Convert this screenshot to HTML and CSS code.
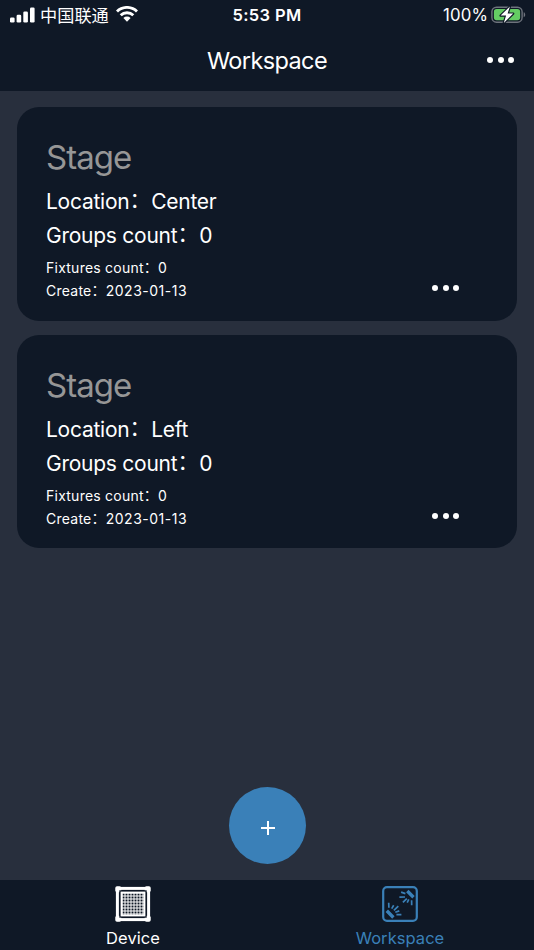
FILE: index.html
```html
<!DOCTYPE html>
<html lang="en">
<head>
<meta charset="utf-8">
<title>Workspace</title>
<link rel="stylesheet" href="styles.css">
</head>
<body>
<div class="app">
  <header class="top">
    <div class="status">
      <div class="carrier">
        <svg class="signal" width="25" height="16" viewBox="0 0 25 16" fill="#fff"><rect x="0" y="10.5" width="4.6" height="5" rx="1.3"/><rect x="6.6" y="7.8" width="4.6" height="7.7" rx="1.3"/><rect x="13.3" y="4.4" width="4.6" height="11.1" rx="1.3"/><rect x="20" y=".5" width="4.6" height="15" rx="1.3"/></svg>
        <span class="carrier-name">中国联通</span>
        <svg class="wifi" width="22" height="16" viewBox="0 0 22 16"><g fill="none" stroke="#fff" stroke-width="2.9"><path d="M1 5.5a14.3 14.3 0 0 1 20 0"/><path d="M4.7 9.3a9 9 0 0 1 12.6 0"/></g><path fill="#fff" d="M7.4 12.1a5.1 5.1 0 0 1 7.2 0L11 15.8z"/></svg>
      </div>
      <span class="clock">5:53 PM</span>
      <div class="power">
        <span class="percent">100%</span>
        <svg width="35" height="19" viewBox="0 0 35 19"><rect x=".9" y="2.2" width="30.2" height="15" rx="4.6" fill="none" stroke="#6e737c" stroke-width="1.4"/><rect x="2.9" y="4.1" width="26.2" height="11.2" rx="2.7" fill="#64cd63"/><path d="M32.7 7.3c2 .6 2 4.3 0 4.9z" fill="#6e737c"/><path d="M18.9 1.6 9.6 10.6h5.5l-2.3 7.3 9.4-9.3h-5.6z" fill="#fff" stroke="#0f1826" stroke-width="2.3" paint-order="stroke" stroke-linejoin="round"/></svg>
      </div>
    </div>
    <div class="nav">
      <h1 class="title">Workspace</h1>
      <button class="more" aria-label="More"><i></i><i></i><i></i></button>
    </div>
  </header>
  <main class="list">
    <article class="card">
      <h2 class="name">Stage</h2>
      <p class="line location">Location<span class="colon">：</span>Center</p>
      <p class="line groups">Groups count<span class="colon">：</span>0</p>
      <p class="small fixtures">Fixtures count<span class="colon">：</span>0</p>
      <div class="foot">
        <p class="small create">Create<span class="colon">：</span><span class="date">2023-01-13</span></p>
        <button class="more" aria-label="More"><i></i><i></i><i></i></button>
      </div>
    </article>
    <article class="card">
      <h2 class="name">Stage</h2>
      <p class="line location">Location<span class="colon">：</span>Left</p>
      <p class="line groups">Groups count<span class="colon">：</span>0</p>
      <p class="small fixtures">Fixtures count<span class="colon">：</span>0</p>
      <div class="foot">
        <p class="small create">Create<span class="colon">：</span><span class="date">2023-01-13</span></p>
        <button class="more" aria-label="More"><i></i><i></i><i></i></button>
      </div>
    </article>
    <button class="add" aria-label="Add"><svg width="14" height="14" viewBox="0 0 14 14"><path d="M7 0v14M0 7h14" stroke="#fff" stroke-width="2"/></svg></button>
  </main>
  <nav class="tabs">
    <a class="tab">
      <svg width="36" height="36" viewBox="0 0 36 36"><defs><pattern id="holes" x="7.5" y="7.5" width="3" height="3" patternUnits="userSpaceOnUse"><rect width="2" height="2" fill="#0f1826"/></pattern></defs><rect x="2.4" y="2.4" width="31.2" height="31.2" fill="none" stroke="#fff" stroke-width="3"/><g fill="#fff"><rect x=".3" y=".3" width="6" height="6" rx="1.8"/><rect x="29.7" y=".3" width="6" height="6" rx="1.8"/><rect x=".3" y="29.7" width="6" height="6" rx="1.8"/><rect x="29.7" y="29.7" width="6" height="6" rx="1.8"/></g><rect x="4.3" y="4.3" width="27.4" height="27.4" fill="#0f1826"/><rect x="5.6" y="5.6" width="24.8" height="24.8" fill="#fff"/><rect x="7.5" y="7.5" width="21" height="21" fill="url(#holes)"/></svg>
      <span class="label device">Device</span>
    </a>
    <a class="tab active">
      <svg width="36" height="36" viewBox="0 0 36 36" fill="none" stroke="#3a80b8"><rect x="1.2" y="1.2" width="33.6" height="33.6" rx="3.8" stroke-width="2.2"/><path d="m25.3 5 6.2 6.2M4.8 24.8l6.6 6.7" stroke-width="3.4"/><path d="M23.4 7.6l-4.3-1.5M23 11l-5.6.1M24.8 12.6l-3.9 3.8M26.8 13.4l-1.6 3.2M29.6 14.2l.1 5M6.9 21.8l-.2-5M9.7 22.6l2-3.4M11.9 24.3l4.4-4.2M13.3 26.3l4-1.4M14.4 28.7l5-.1" stroke-width="1.7"/></svg>
      <span class="label workspace">Workspace</span>
    </a>
  </nav>
</div>
</body>
</html>
```
FILE: styles.css
```css
* { box-sizing: border-box; margin: 0; padding: 0; }
body { background: #282f3d; color: #fff; font-family: Inter, "Noto Sans CJK SC", sans-serif; }
button { border: 0; background: none; color: inherit; font: inherit; }
svg { display: block; flex: none; }
.app { width: 534px; height: 950px; display: flex; flex-direction: column; }
.top { height: 91px; background: #0f1826; }
.status { height: 30px; display: grid; grid-template-columns: 1fr auto 1fr; align-items: center; padding: 0 8px 0 10px; }
.carrier { display: flex; align-items: center; }
.signal { margin-top: -1px; }
.carrier-name { margin-left: 5px; font-size: 17.2px; line-height: 28px; padding-top: 2px; }
.wifi { margin-left: 7px; margin-top: -2px; }
.clock { font-size: 16.5px; line-height: 30px; margin-right: 2px; font-weight: 600; letter-spacing: .35px; }
.power { display: flex; justify-content: flex-end; align-items: center; gap: 3px; }
.power svg { margin-top: -1px; }
.percent { font-size: 16.8px; letter-spacing: .1px; }
.nav { height: 61px; display: grid; grid-template-columns: 1fr auto 1fr; align-items: center; padding: 0 20px; }
.title { grid-column: 2; font-size: 23.5px; line-height: 60px; font-weight: 400; letter-spacing: -.6px; }
.more { display: flex; justify-content: space-between; width: 27px; height: 6px; }
.nav .more { justify-self: end; margin-top: -1px; }
.more i { width: 6px; height: 6px; border-radius: 50%; background: #fff; }
.list { flex: 1; display: flex; flex-direction: column; gap: 14.3px; padding: 16px 17px; }
.card { height: 213.5px; flex: none; padding: 30px 58px 0 29px; border-radius: 22px; background: #0f1826; }
.name { color: #969696; font-size: 33px; line-height: 41px; font-weight: 400; letter-spacing: -.95px; }
.line { font-size: 21px; line-height: 34px; height: 34px; letter-spacing: -.25px; }
.location { margin-top: 7px; }
.colon { display: inline-block; line-height: 1; transform: translateY(-10%); }
.line .colon { margin-right: 1px; }
.small { font-size: 14px; line-height: 23px; height: 23px; letter-spacing: .24px; }
.date { letter-spacing: .5px; }
.fixtures { margin-top: 3px; }
.foot { display: flex; justify-content: space-between; align-items: flex-start; }
.foot .more { margin-top: 6.4px; }
.add { width: 77px; height: 77px; margin: auto auto 0; border-radius: 50%; background: #3a80b8; display: grid; place-items: center; }
.add svg { margin: 4px 0 0 1px; }
.tabs { height: 70px; display: grid; grid-template-columns: 1fr 1fr; background: #0f1826; }
.tab { display: flex; flex-direction: column; align-items: center; padding: 6px 1px 0 0; }
.active { color: #3a80b8; }
.label { font-size: 16.5px; line-height: 20px; margin-top: 6px; letter-spacing: .05px; }
```
